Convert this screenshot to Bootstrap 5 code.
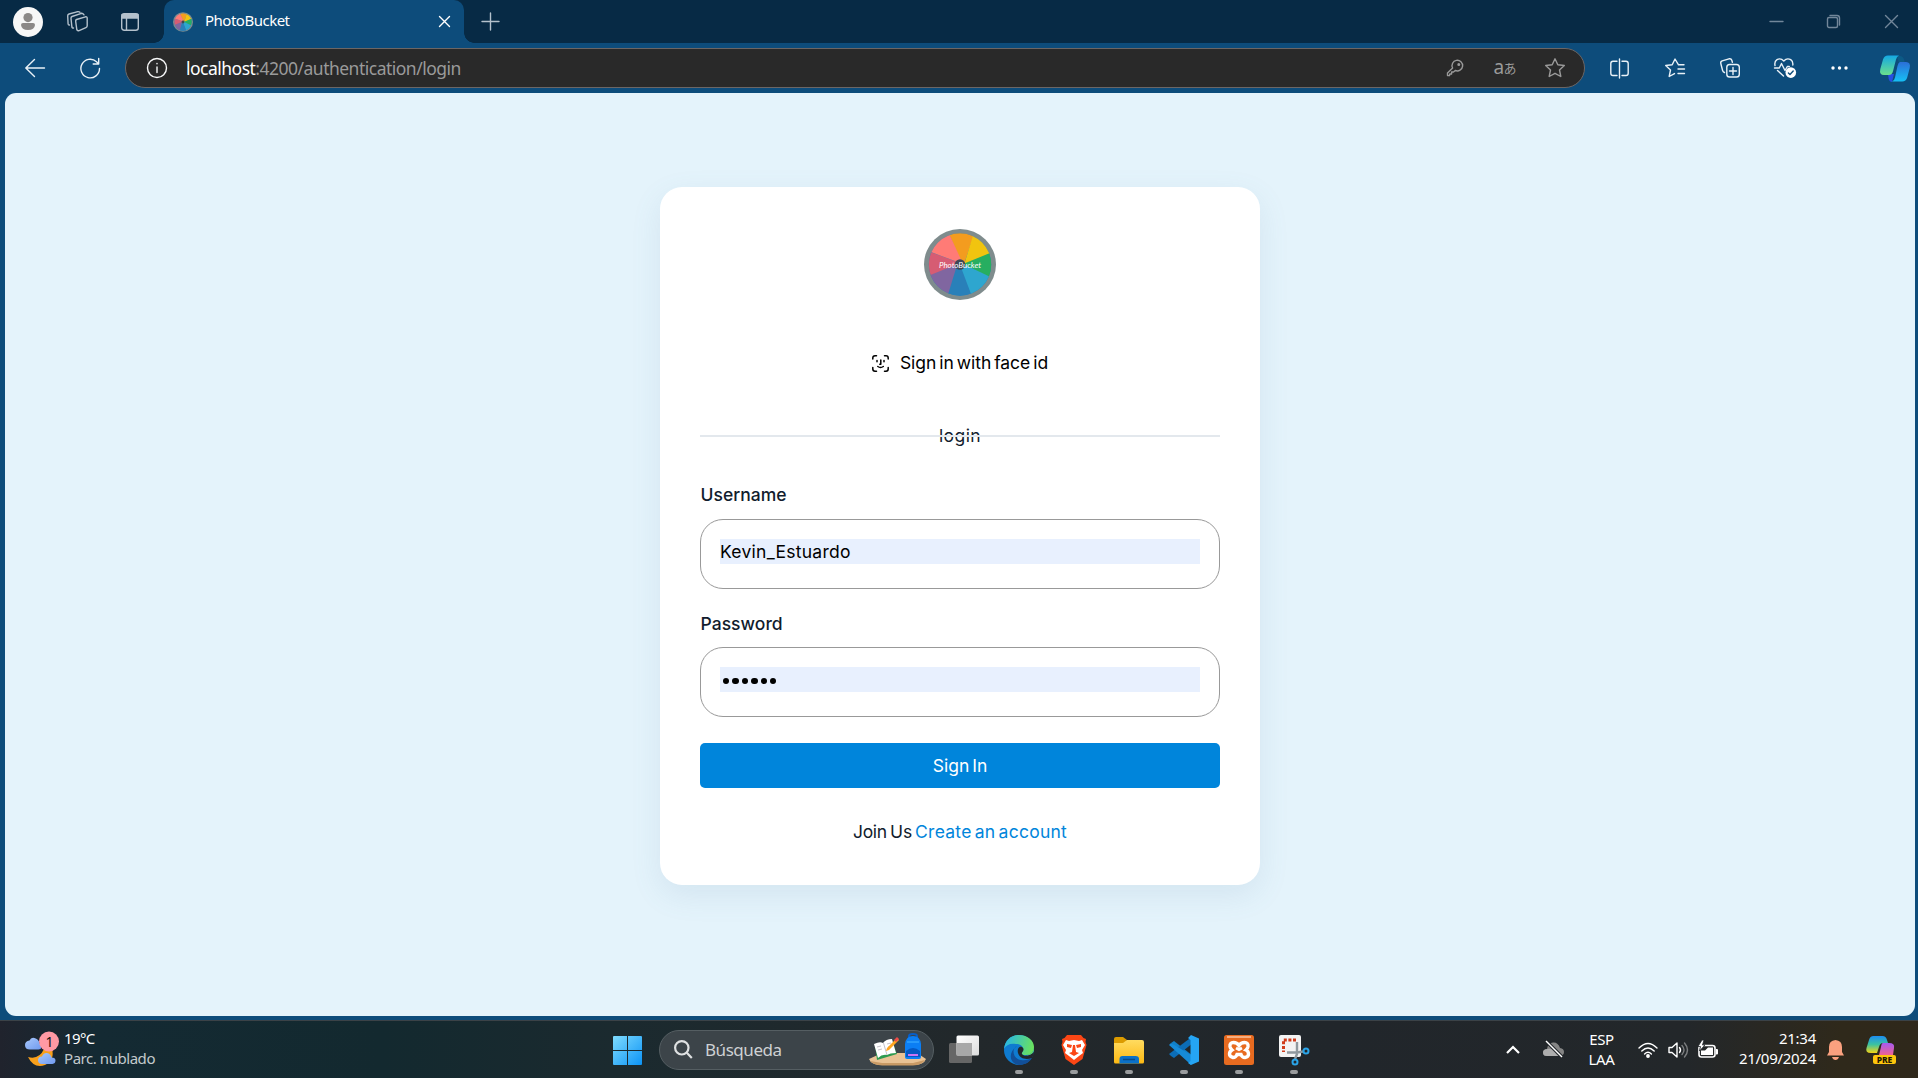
<!DOCTYPE html>
<html lang="es">
<head>
<meta charset="utf-8">
<meta name="viewport" content="width=device-width, initial-scale=1">
<title>PhotoBucket</title>
<link href="https://cdn.jsdelivr.net/npm/bootstrap@5.3.0/dist/css/bootstrap.min.css" rel="stylesheet">
<style>
body{height:1078px;overflow:hidden;background:#0d4c7b;font-family:"Noto Sans","Open Sans",sans-serif;line-height:20px}
svg{display:block;overflow:visible;flex:none}
.ln{fill:none;stroke:currentColor;stroke-width:1.4;stroke-linecap:round;stroke-linejoin:round}
.titlebar{height:43px;background:#072a45;color:#b4c1cc}
.avatar{margin:0 24px 0 13px}
.actions{margin-left:32px}
.tab{width:300px;height:43px;margin-left:25px;padding:0 14px 0 9px;background:#0d4c7b;border-radius:10px 10px 0 0;color:#fff;font-size:15px}
.tab::before,.tab::after{content:"";position:absolute;bottom:0;width:10px;height:10px}
.tab::before{left:-10px;background:radial-gradient(circle at 0 0,transparent 9.5px,#0d4c7b 10px)}
.tab::after{right:-10px;background:radial-gradient(circle at 100% 0,transparent 9.5px,#0d4c7b 10px)}
.tab-title{margin-left:12px;letter-spacing:-.5px;line-height:40px;padding-bottom:4px}
.newtab{margin-left:18px}
.wins{color:#72879a;margin-right:-2px}
.win{width:57.5px}
.toolbar{height:50px;color:#e9f1f7}
.pill{flex:none;width:1460px;height:40px;border:1px solid #6b6665;border-radius:20px;background:#292929;color:#9a9a9a}
.url{font-size:17.5px;margin-left:19px;letter-spacing:-.51px;line-height:36px;padding-bottom:1px}
.trans{padding-bottom:2px}
.trans-a{font-size:19px;line-height:20px;letter-spacing:-.5px}
.trans-b{font-family:"Noto Sans CJK JP",sans-serif;font-size:13px;line-height:20px;padding-top:2px}
.c50{width:50px}.c55{width:55px;flex:none}
.viewport{height:923px;margin:0 3px 4px 5px;padding-top:94px;background:#e4f3fb;border-radius:11px}
.login{width:600px;height:698px;border:0;border-radius:22px;padding:42px 40px 0;color:#111c2d;font-family:Inter,"Noto Sans",sans-serif;font-size:17.5px;line-height:24px;box-shadow:0 10px 30px rgba(90,135,165,.12)}
.face{margin-top:51px;color:#000}
.face svg{margin-right:11px;stroke-width:1.5}
.face span{letter-spacing:-.02px;word-spacing:-2px}
.divide{height:24px;margin-top:49px;letter-spacing:.4px}
.divide::after{content:"";position:absolute;left:0;right:0;top:11px;height:2px;background:#e3e8ed}
.lbl{font-weight:500;padding-left:.5px;letter-spacing:.03px}
.fieldbox{height:70px;border:1px solid #999;border-radius:23px;padding:19px}
.fill{height:25px;background:#e8f0fe;color:#000;line-height:26px;letter-spacing:.26px}
.dots{gap:3px;padding:3px 0 0 3px}
.dots i{width:6.4px;height:6.4px;border-radius:50%;background:#000}
.enter{height:45px;margin-top:26px;border-radius:5px;background:#0085db;color:#fff;font-size:17.5px;line-height:24px;padding:0;letter-spacing:0;word-spacing:-2px}
.join{margin-top:32px;word-spacing:-1.5px;letter-spacing:-.25px}
.join a{color:#0085db;text-decoration:none;letter-spacing:.25px;word-spacing:-2px}
.taskbar{height:58px;border-top:1px solid #3b4247;background:linear-gradient(90deg,#20232d 0,#142a33 5%,#13292f 20%,#1b2a2f 32%,#22282b 50%,#21262b 70%,#23272a 88%,#2f291b 96%,#2f281b 100%);color:#fff;font-size:15px}
.left{width:600px}
.wx{margin-left:25px}
.wtext{margin-left:4px;padding-bottom:3px}
.start{margin:2px 17px 0 13px}
.search{width:275px;height:40px;border:1px solid #555e62;border-radius:20px;background:#3c4449;color:#ced1d3;font-size:17px}
.search-text{margin-left:12px;letter-spacing:-.45px}
.apps{margin-left:2.5px}
.app{width:55px;height:57px;padding-top:14px}
.app.on::after{content:"";width:8px;height:4px;border-radius:2px;background:#9a9c9e;margin-top:5px}
.tray{margin-right:22px}
.lang{width:29px;margin:0 22px 0 23px;letter-spacing:-.4px;padding-bottom:2px}
.clock{width:78px;margin:0 11px 0 19px;white-space:nowrap;padding-bottom:3px;letter-spacing:-.27px}
</style>
<script src="https://cdn.jsdelivr.net/npm/bootstrap@5.3.0/dist/js/bootstrap.bundle.min.js"></script>
</head>
<body>
<svg width="0" height="0" class="position-absolute">
<defs>
<clipPath id="wc"><circle cx="36" cy="35.5" r="31.2"/></clipPath>
<symbol id="wheel" viewBox="0 0 72 71">
<ellipse cx="36" cy="35.5" rx="36" ry="35.5" fill="#7f8c8d"/>
<g clip-path="url(#wc)">
<path fill="#2980b9" d="M0 0h72v72H0z"/>
<path fill="#f39c1f" d="M39 38L23 0 40-4 52 0z"/><path fill="#f1c40f" d="M40 36L51 0 70 4 76 20z"/><path fill="#27ae60" d="M34 37L76 20 76 40 72 51z"/><path fill="#2ea6cf" d="M33 32L73 51 62 68 50 73z"/><path fill="#2980b9" d="M35 33L50 73 35 74 21 72z"/><path fill="#8066a0" d="M34 33L22 72 4 62-1 49z"/><path fill="#d65c73" d="M36 34L-1 49-4 35 0 20.500z"/><path fill="#ff7b76" d="M39 35L0 20.500 10 4 23 0z"/>
</g><circle cx="36" cy="35.500" r="5.200" fill="#3f4854"/></symbol>
<linearGradient id="g1" x1="0" y1="0" x2="1" y2="1"><stop stop-color="#7fdcff"/><stop offset="1" stop-color="#0c93f5"/></linearGradient>
<linearGradient id="g2" x1="0" y1="0" x2="0" y2="1"><stop stop-color="#14a8e4"/><stop offset="1" stop-color="#6be08c"/></linearGradient>
<linearGradient id="g3" x1="0" y1="0" x2="0" y2="1"><stop stop-color="#2b6fd8"/><stop offset="1" stop-color="#16c0f5"/></linearGradient>
<linearGradient id="g4" x1="0" y1=".3" x2="1" y2=".5"><stop stop-color="#27b5e8"/><stop offset="1" stop-color="#6be25c"/></linearGradient>
<linearGradient id="g5" x1="0" y1="0" x2="0" y2="1"><stop stop-color="#ffdb60"/><stop offset="1" stop-color="#fdb913"/></linearGradient>
<linearGradient id="g6" x1="0" y1="0" x2="0" y2="1"><stop stop-color="#1d8df2"/><stop offset=".5" stop-color="#3bc2a0"/><stop offset="1" stop-color="#f5d514"/></linearGradient>
<linearGradient id="g7" x1="0" y1="0" x2="0" y2="1"><stop stop-color="#a45af2"/><stop offset="1" stop-color="#f06292"/></linearGradient>
<linearGradient id="g8" x1="0" y1="0" x2="1" y2="1"><stop stop-color="#fff"/><stop offset="1" stop-color="#dcdcdc"/></linearGradient>
<linearGradient id="g9" x1="0" y1="0" x2="1" y2="1"><stop stop-color="#a9c8fb"/><stop offset="1" stop-color="#6f9af0"/></linearGradient>
</defs></svg>

<header class="titlebar d-flex align-items-center">
<svg class="avatar" width="30" height="30"><circle cx="15" cy="15" r="15" fill="#f7f7f7"/><circle cx="15" cy="10.600" r="4.600" fill="#8b8887"/><path d="M10 16h10q2 0 2 2-.5 5-7 5t-7-5q0-2 2-2z" fill="#8b8887"/></svg>
<svg class="ln" width="22" height="22"><path d="M9.500 8.500l9-2.700q1.700-.4 1.700 1.400v7.600q0 1.300-1.300 1.800l-6.800 3q-1.700.7-2.300-1l-1.100-8.100q-.3-1.500.8-2zM6.500 17q-1.300.4-1.600-1L4 7.500Q3.800 6 5 5.500L14.500 2.300M2.500 14q-1.200.2-1.400-1L.7 5Q.6 3.500 2 3L10 .8M17 3.800q-1-1.500-2.500-1.500M13 1.200Q12 .4 10 .8"/></svg>
<svg class="ln actions" width="18" height="18"><rect x=".7" y=".7" width="16.600" height="16.600" rx="2.500"/><path d="M1 1.500h16V5H1z" fill="currentColor"/><path d="M5.500 5v12"/></svg>
<div class="tab d-flex align-items-center position-relative">
<svg width="20" height="20"><use href="#wheel"/></svg><span class="tab-title">PhotoBucket</span>
<svg class="ln ms-auto" width="11" height="11"><path d="M.5.500l10 10M10.500.500l-10 10"/></svg></div>
<svg class="ln newtab" width="17" height="17"><path d="M8.500 0v17M0 8.500h17"/></svg>
<div class="wins d-flex ms-auto">
<div class="win d-flex justify-content-center"><svg class="ln" width="13" height="13"><path d="M0 6.500h13"/></svg></div>
<div class="win d-flex justify-content-center"><svg class="ln" width="13" height="13"><rect x=".5" y="2.500" width="10" height="10" rx="1.500"/><path d="M3 .5h7q2.500 0 2.500 2.500v7"/></svg></div>
<div class="win d-flex justify-content-center"><svg class="ln" width="13" height="13"><path d="M.5.500l12 12M12.500.500l-12 12"/></svg></div></div>
</header>

<div class="toolbar d-flex align-items-center">
<svg class="ln" width="20" height="18" style="margin-left:25px"><path d="M19.500 9H1M9.500.500L.8 9l8.700 8.500"/></svg>
<svg class="ln" width="21" height="21" style="margin:0 24px 0 35px"><path d="M19.500 10.500a9.300 9.300 0 1 1-3-6.800l2 2M18.700.500v5.500h-5.500"/></svg>
<div class="pill d-flex align-items-center">
<svg class="ln text-light" width="20" height="20" style="margin-left:21px"><circle cx="10" cy="10" r="9.500"/><path d="M10 9v5.500M10 5.500v.3"/></svg>
<span class="url"><span class="text-white">localhost</span>:4200/authentication/login</span>
<div class="d-flex align-items-center ms-auto me-1">
<div class="c50 d-flex justify-content-center"><svg class="ln" width="16" height="16"><path d="M5.600 8A5.300 5.300 0 1 1 8.300 10.500L6.500 12H4.600v2H2.800l-.3 1.600H.5V13z"/><circle cx="11.800" cy="4.500" r=".8"/></svg></div>
<div class="c50 trans d-flex justify-content-center align-items-center"><span class="trans-a">a</span><span class="trans-b">あ</span></div>
<div class="c50 d-flex justify-content-center"><svg class="ln" width="20" height="20"><path d="M10 .8l2.800 5.900 6.500.8-4.800 4.500 1.300 6.500L10 15.300l-5.800 3.200L5.500 12 .7 7.500l6.500-.8z"/></svg></div></div></div>
<div class="d-flex align-items-center" style="margin-left:7px">
<div class="c55 d-flex justify-content-center"><svg class="ln" width="19" height="19"><path d="M9.500 0v19M7 2.200H3Q.8 2.200.8 4.500v9.700q0 2.300 2.200 2.300h4M12 2.200h4q2.200 0 2.200 2.300v9.700q0 2.300-2.200 2.300h-4"/></svg></div>
<div class="c55 d-flex justify-content-center"><svg class="ln" width="20" height="20"><path d="M19 6.800h-5.500L10 1 7.200 6.700.7 7.500 5.500 12l-1.300 6.500 5.300-2.900M13 11h6.500M13 15.500h6.500"/></svg></div>
<div class="c55 d-flex justify-content-center"><svg class="ln" width="20" height="20"><rect x="6.800" y="6.500" width="12.500" height="12.500" rx="2.800"/><path d="M13 9.500v7M9.500 13h7M4.500 14.500Q3 14 2.600 12.500L.8 5.500Q.3 3.500 2.200 2.800L9 .8q2.200-.5 2.800 1.500l.6 2"/></svg></div>
<div class="c55 d-flex justify-content-center"><svg class="ln" width="22" height="20"><path d="M.5 10h4.800l2.200-4.500 3.500 7 2.300-4h2M1 7.500Q.2 3.500 3 1.700 6.500-.5 9.800 3 13-.5 16.700 1.700 19.300 3.500 18.800 7M3.500 12.500l6 5.500"/><circle cx="16.800" cy="14.600" r="5.300" fill="#fff" stroke="none"/><path d="M14.400 15l1.600 1.500 3.200-3.500" stroke="#0d4c7b"/></svg></div>
<div class="c55 d-flex justify-content-center"><svg width="17" height="4" fill="#fff"><circle cx="2" cy="2" r="1.700"/><circle cx="8.500" cy="2" r="1.700"/><circle cx="15" cy="2" r="1.700"/></svg></div>
<div class="c55 d-flex justify-content-center"><svg width="30" height="27"><path d="M17 1h3q3 0 4 3.500L25 8h-6z" fill="#0c5a86"/><path d="M8 19h6l-2 8q-2.500 0-3.300-3z" fill="#274fe0"/><path d="M8 .5h11q-2.300 1-3 4l-2.800 11q-1 4.500-4.500 4.500H4Q-1 20 .3 14L3 4.500Q4.300.500 8 .500z" fill="url(#g2)"/><path d="M20 7h6q5 0 3.700 6l-2.500 9.500q-1.200 4-5 4H12q2.500-1 3-4L17.500 11q.8-3.500 2.500-4z" fill="url(#g3)"/></svg></div></div>
</div>

<main class="viewport d-flex justify-content-center align-items-start">
<div class="card login">
<svg class="mx-auto" width="72" height="71"><use href="#wheel"/><text x="15" y="38.500" textLength="42" lengthAdjust="spacing" font-family="Lato,sans-serif" font-style="italic" font-size="8" fill="#fff">PhotoBucket</text></svg>
<div class="face d-flex justify-content-center align-items-center"><svg class="ln" width="17" height="17"><path d="M.8 4V3Q.8.800 3 .8h1.500M12.500.800H14q2.200 0 2.200 2.200v1M.8 12.500V14q0 2.200 2.200 2.200h1.500M12.500 16.200H14q2.200 0 2.200-2.200v-1.500M5 5.500v1.300M12 5.500v1.300M8.800 5v4.300H7.800M5.800 11.500q2.700 2 5.500 0"/></svg><span>Sign in with face id</span></div>
<div class="divide position-relative text-center">login</div>
<div class="lbl" style="margin-top:35px">Username</div>
<div class="fieldbox" style="margin-top:12px"><div class="fill">Kevin_Estuardo</div></div>
<div class="lbl" style="margin-top:23px">Password</div>
<div class="fieldbox" style="margin-top:11px"><div class="fill dots d-flex align-items-center"><i></i><i></i><i></i><i></i><i></i><i></i></div></div>
<button class="btn enter w-100">Sign In</button>
<div class="join text-center">Join Us <a href="#">Create an account</a></div>
</div>
</main>

<footer class="taskbar d-flex align-items-center">
<div class="left d-flex align-items-center">
<svg class="wx" width="35" height="36"><path d="M27 16q3 13-7 17-11 4-17-8 11 3 16-8z" fill="#f9a01b"/><path d="M5 17.500q-5 0-5-4.500 0-4 4.500-4.500Q6 5 9.500 6q4 1 5 5 4 6-1 6.500z" fill="url(#g9)"/><path d="M17 32q-4 0-4-3.700t4-3.800q1.500-4 5-3.500t4.500 4.500q4 0 4 3t-3 3.500z" fill="url(#g9)"/><circle cx="24" cy="9.500" r="10" fill="#ff99a4"/><text x="24.500" y="15" text-anchor="middle" font-size="14" fill="#111">1</text></svg>
<div class="wtext"><div style="letter-spacing:-.6px">19°C</div><div style="color:#c4cacd;letter-spacing:-.45px">Parc. nublado</div></div></div>
<svg class="start" width="29" height="29" fill="url(#g1)"><path d="M0 1q0-1 1-1h13v14H0zM15 0h13q1 0 1 1v13H15zM0 15h14v14H1q-1 0-1-1zM15 15h14v13q0 1-1 1H15z"/></svg>
<div class="search d-flex align-items-center">
<svg width="19" height="19" style="margin-left:14px" fill="none" stroke="#dfe1e2" stroke-width="2.200"><circle cx="7.800" cy="7.800" r="6.700"/><path d="M12.800 12.800l5 5.200"/></svg>
<span class="search-text">Búsqueda</span>
<svg width="57" height="32" style="margin:0 7px 0 auto"><path d="M0 25L13 19H48L57 25Q55 31 44 31H13Q2 31 0 25z" fill="#e9c294"/><path d="M1 27Q5 31 13 31.500H44Q53 31 56 26l-12 3H13z" fill="#c99a65"/><path d="M6 11l17-4 5 13-20 6z" fill="#2e9b50"/><path d="M5 10q6-3 9-1 3-4 9-4l4 14q-6 0-9 2-5-1-9 3z" fill="#fff"/><path d="M14.500 9l3.500 12M8 13l4-1M9 16l4-1M18 10l4-1M19 13l4-1" stroke="#aaa6b0" stroke-width=".7"/><path d="M28 4l2 2-10 10-3 1 1-3z" fill="#ffa51f"/><path d="M28 3l2 2-3 3-2-2z" fill="#ed4b48"/><path d="M40 5V2q0-2 4-2t4 2v3" fill="none" stroke="#075ec8" stroke-width="2"/><path d="M36 10q1-8 8-8t8 8v13q0 2-2 2H38q-2 0-2-2z" fill="#0b7ef4"/><path d="M37 17q7-6 14 0v6H37z" fill="#0459c4"/><path d="M38 8h12" stroke="#43b3ff"/><path d="M39 21h10" stroke="#c874f5" stroke-width="2"/></svg></div>
<div class="apps d-flex">
<div class="app d-flex flex-column align-items-center"><svg width="30" height="30"><rect y="8" width="23" height="20" rx="1.500" fill="#666"/><rect x="7.500" y=".5" width="22.500" height="20" rx="1.500" fill="url(#g8)"/><path d="M7.500 8H23v12.500H7.500z" fill="#a8a8a8"/></svg></div>
<div class="app on d-flex flex-column align-items-center"><svg width="30" height="30"><circle cx="15" cy="15" r="15" fill="#0f7bd0"/><path d="M0 14C1 5 7 0 15 0c9 0 15 6 15 12 0 5-4 8-8 8-4 0-6-1-4-3 3-5-1-8-6-8C6 8 2 10 0 14z" fill="url(#g4)"/><path d="M13 11c-6 3-4 13 4 14 5 1 8-1 11-2-3 5-8 7-13 7C6 29 3 18 13 11z" fill="#124f98"/><path d="M18 12c4 3-1 5 0 7 2 3 8 2 12-2q.3 3-2 6c-6 2-12 1-14-5-1-4 1-7 4-6z" fill="#22272c"/><path d="M19 18c4 4 10 2 11-3V12c0 5-4 8-8 8q-2 0-3-2z" fill="#6be25c"/></svg></div>
<div class="app on d-flex flex-column align-items-center"><svg width="30" height="30"><path d="M8 0h14l2.500 3 2.500 1-.5 3 1 3-4 14-8.500 6L6.500 24l-4-14 1-3L3 4l2.500-1z" fill="#fb4615"/><path d="M7 5l3 1 5-1 5 1 3-1 3 5-3 5 1 3-4 3-5 4-5-4-4-3 1-3-3-5z" fill="#fff"/><path d="M8 9l5 1-1 3-4-1zM22 9l-5 1 1 3 4-1zM14 10h2l1 7 3 1-5 3-5-3 3-1zM9 16l2 3M21 16l-2 3" fill="#fb4615"/></svg></div>
<div class="app on d-flex flex-column align-items-center"><svg width="30" height="30"><path d="M0 4q0-2 2-2h7l4 3-3 6H0z" fill="#dc9b00"/><path d="M0 8h9l4-3h15q2 0 2 2v20q0 1.500-1.500 1.500H1.500Q0 28.500 0 27z" fill="url(#g5)"/><path d="M5.500 28.500V24q0-3 3-3h13q3.500 0 3.500 3v4.500z" fill="#0b71c8"/><path d="M9 24.500h12" stroke="#084b8a" stroke-width="1.500"/></svg></div>
<div class="app on d-flex flex-column align-items-center"><svg width="30" height="30"><path d="M2 8l3-2 19 15v7z" fill="#1180c8"/><path d="M2 21l3 2L24 8V1L0 19z" fill="#0c6db7"/><path d="M2 8L0 10l19 17 3 3V20z" fill="#168bd8"/><path d="M22 0l8 3.500v23L22 30l-3-2 2.500-2V5L19 3z" fill="#25a5f4"/></svg></div>
<div class="app on d-flex flex-column align-items-center"><svg width="30" height="30"><rect width="30" height="30" rx="2.500" fill="#e86b20"/><path d="M3 2h24" stroke="#f6ae80" stroke-width="2"/><path d="M15 10.500Q13 7.500 9.500 7.500q-4 0-3.500 4 .3 2 2 3.500-2.500 1.500-2.500 4t3.500 3.500q3 0 4-3h4q1 3 4 3 3.500-.5 3.500-3.500t-2.500-4q1.700-1.500 2-3.500.5-4-3.500-4-3.500 0-5.500 3z" fill="none" stroke="#fff" stroke-width="3.400"/><path d="M12 13l3 1.500 3-1.500" fill="none" stroke="#fff" stroke-width="3"/></svg></div>
<div class="app on d-flex flex-column align-items-center"><svg width="30" height="30"><rect width="22" height="22" rx="2" fill="#f3f3f3"/><path d="M17 5H4.500v12" fill="none" stroke="#d13b1a" stroke-width="3" stroke-dasharray="3 1.600"/><path d="M18 7v12l-2 5M8 17.500h10l6-1" stroke="#8f989e" stroke-width="2.400" fill="none"/><circle cx="27" cy="16" r="2.500" fill="none" stroke="#2aa4e8" stroke-width="2"/><circle cx="16" cy="27" r="2.500" fill="none" stroke="#2aa4e8" stroke-width="2"/></svg></div></div>
<div class="tray d-flex align-items-center ms-auto">
<svg width="14" height="8" fill="none" stroke="#fff" stroke-width="2.200" style="margin-right:23px"><path d="M1 7l6-6 6 6"/></svg>
<svg width="21" height="17"><path d="M4 15Q0 15 0 11.500T4 8q1-6 6-6.500T17 7q4 .5 4 4t-4 4z" fill="#858585"/><path d="M5 8q5-1 7 3t5 4H4Q0 15 0 11.500T5 8z" fill="#adadad"/><path d="M3 0l16 16" stroke="#22262a" stroke-width="3.500"/><path d="M3 0l16 16" stroke="#fff" stroke-width="1.500"/></svg>
<div class="lang text-center"><div>ESP</div><div>LAA</div></div>
<svg class="ln" width="20" height="16"><path d="M1 6q9-9 18 0M3.800 9q6.200-6 12.400 0M6.600 12q3.400-3.400 6.800 0"/><circle cx="10" cy="14" r="1.200" fill="#fff"/></svg>
<svg class="ln" width="20" height="18" style="margin:0 10px"><path d="M1 6.500h3L9 2v14l-5-4.500H1z"/><path d="M11.500 6.500q2 2.500 0 5"/><path d="M14 4.500q4 4.500 0 9M16.500 2q6 7 0 14" opacity=".4"/></svg>
<svg width="21" height="18"><rect x="1" y="4.500" width="16" height="11.500" rx="2.500" fill="none" stroke="#fff" stroke-width="1.600"/><path d="M3 14V9.500h4l3-3h5v7.500H3zM18 8h1q1 0 1 1v3.500q0 1-1 1h-1z" fill="#fff"/><path d="M4-1L0 5.500h2.500L1.500 10 7 4H4.500l1.500-5z" fill="#fff" stroke="#22262a" stroke-width=".8"/></svg>
<div class="clock text-end"><div>21:34</div><div>21/09/2024</div></div>
<svg width="17" height="20" fill="#fba17f"><path d="M8.500 0Q15 .5 15 7v5l2 3.500H0L2 12V7Q2 .5 8.500 0zM5 17h7q-1 3-3.500 3T5 17z"/></svg>
<svg width="30" height="30" style="margin-left:22px"><path d="M7.500 1h9q3.500 0 4.500 4l1 3h-5q-3 0-4 4l-2 6H5Q-1 18 .5 13L3 5q1-4 4.500-4z" fill="url(#g6)"/><path d="M17 8h6q6 0 5 5l-1 7H13l2-8q.5-4 2-4z" fill="url(#g7)"/><rect x="7" y="20" width="23" height="9" rx="2" fill="#fdc50c"/><text x="18.500" y="27.500" text-anchor="middle" font-size="8.500" font-weight="800" fill="#1c1600">PRE</text></svg></div>
</footer>
</body>
</html>
